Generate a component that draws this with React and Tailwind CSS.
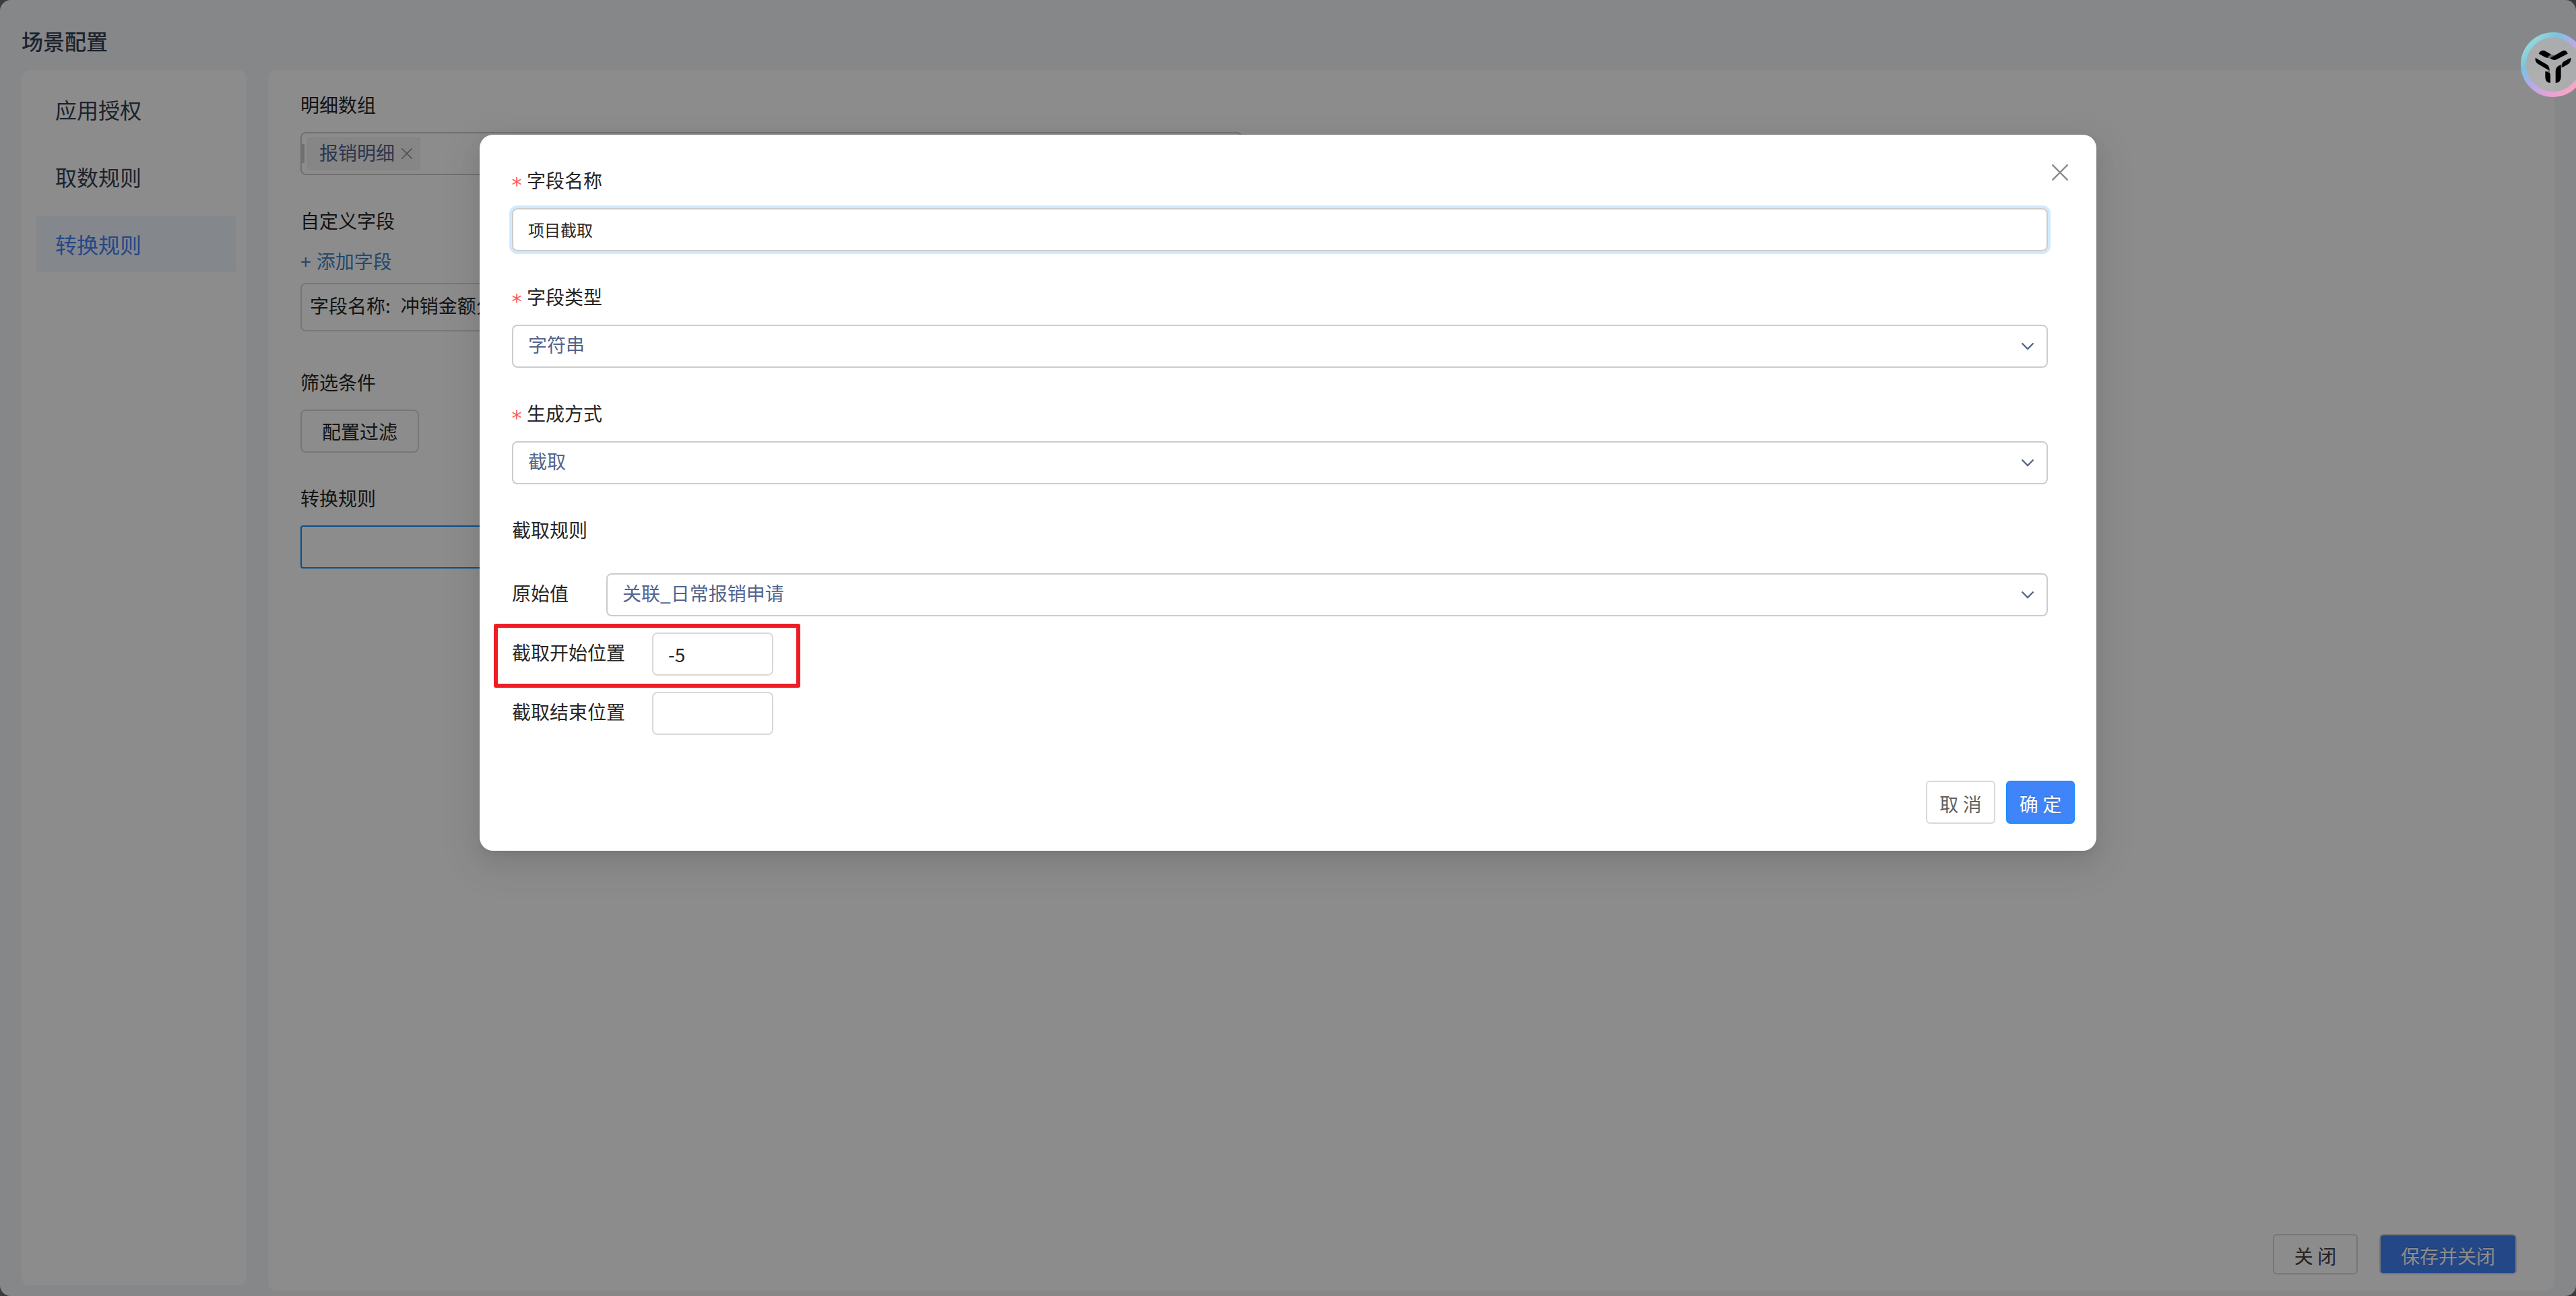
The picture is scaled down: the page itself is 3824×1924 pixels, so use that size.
import clsx from 'clsx';

const menus = [
  { key: 'auth', label: '应用授权' },
  { key: 'fetch', label: '取数规则' },
  { key: 'transform', label: '转换规则' },
];

function ChevronIcon() {
  return (
    <svg width="20" height="12" viewBox="0 0 20 12" fill="none" className="flex-shrink-0">
      <path d="M1.5 1.5 L10 10 L18.5 1.5" stroke="#53658c" strokeWidth="2.4" />
    </svg>
  );
}

function CloseIcon({ className }) {
  return (
    <svg viewBox="0 0 24 24" fill="none" className={className}>
      <path d="M1.2 1.2 L22.8 22.8 M22.8 1.2 L1.2 22.8" stroke="currentColor" strokeWidth="2.4" strokeLinecap="round" />
    </svg>
  );
}

function Label({ required, className, children }) {
  return (
    <div className={clsx('flex h-11 items-center leading-[44px]', className)}>
      {required && (
        <span className="-ml-[2px] mr-2 w-4 pt-[16px] text-[30px] leading-[28px] text-[#ff5c5e] font-['DejaVu_Sans_Mono']">*</span>
      )}
      <span>{children}</span>
    </div>
  );
}

function Select({ value, className }) {
  return (
    <div className={clsx('flex h-16 items-center justify-between rounded-lg border-2 border-[#ccc] pl-[22px] pr-[18px]', className)}>
      <span className="pb-[6px] text-[#53658c]">{value}</span>
      <ChevronIcon />
    </div>
  );
}

function PositionRow({ label, value, className }) {
  return (
    <div className={clsx('flex h-16 items-center', className)}>
      <span className="w-52 pb-[6px]">{label}</span>
      <div className="flex h-16 w-[180px] items-center rounded-lg border-2 border-[#d9d9d9] px-[22px]">{value}</div>
    </div>
  );
}

function Sidebar() {
  return (
    <aside className="h-[1804px] w-[334px] space-y-4 rounded-xl bg-white py-4 pl-[22px] pr-4">
      {menus.map(({ key, label }) => (
        <div
          key={key}
          className={clsx(
            'flex h-[84px] items-center rounded-l px-7 text-[32px]',
            key === 'transform' ? 'bg-[#f0f6ff] text-[#4285f8]' : 'text-[#354052]'
          )}
        >
          {label}
        </div>
      ))}
    </aside>
  );
}

function RulePanel() {
  return (
    <main className="flex h-[1812px] w-[3394px] flex-col rounded-xl bg-white pb-6 pl-12 pr-14 pt-[29px] text-[28px] text-[#262626]">
      <Label>明细数组</Label>
      <div className="mt-[19px] flex h-16 w-[1398px] items-center rounded-lg border-2 border-[#ccc]">
        <div className="h-7 w-1 bg-[#ccc]" />
        <div className="ml-1 flex h-12 w-[168px] items-center rounded border-2 border-[#f0f0f0] bg-[#f5f5f5] pl-4 text-[#53658c]">
          <span className="pb-[4px] leading-[44px]">报销明细</span>
          <CloseIcon className="ml-[10px] h-4 w-4 text-[#8c8c8c]" />
        </div>
      </div>

      <Label className="mt-[45px]">自定义字段</Label>
      <Label className="mt-4 text-[#4484c4] [word-spacing:2px]">+ 添加字段</Label>
      <div className="mt-[11px] flex h-[72px] w-[1398px] items-center rounded-lg border-2 border-[#d9d9d9] px-3 pb-[6px]">
        <span className="mr-[15px]">字段名称:</span>
        <span>冲销金额分摊</span>
      </div>

      <Label className="mt-[53px]">筛选条件</Label>
      <button className="mt-[19px] h-16 w-[176px] rounded-lg border-2 border-[#d9d9d9]">配置过滤</button>

      <Label className="mt-[45px]">转换规则</Label>
      <div className="mt-[19px] h-16 w-[1398px] rounded border-2 border-[#1890ff]" />

      <div className="mt-auto flex justify-end gap-8">
        <button className="h-[60px] w-[126px] rounded-md border-2 border-[#d9d9d9] pt-1 leading-[52px] text-[#404040]">关 闭</button>
        <button className="h-[60px] w-[204px] rounded-md border-2 border-[#d9d9d9] bg-[#4381f7] pt-1 leading-[52px] text-white [text-shadow:0_-2px_0_rgba(0,0,0,0.12)]">
          保存并关闭
        </button>
      </div>
    </main>
  );
}

function FieldModal() {
  return (
    <div className="relative h-[1063px] w-[2400px] rounded-[20px] bg-white pl-12 pr-[72px] pt-[45px] text-[28px] text-[#262626] shadow-[0_12px_32px_0_rgba(0,0,0,0.08),0_6px_12px_-8px_rgba(0,0,0,0.12),0_18px_56px_16px_rgba(0,0,0,0.05)]">
      <CloseIcon className="absolute right-[42px] top-[44px] h-6 w-6 text-[#8c8c8c]" />

      <Label required>字段名称</Label>
      <div className="mt-5 flex h-16 items-center rounded-lg border-2 border-[#ccc] px-[22px] text-2xl ring-4 ring-[#d1e9ff]">
        项目截取
      </div>

      <Label required className="mt-[45px]">字段类型</Label>
      <Select value="字符串" className="mt-5" />

      <Label required className="mt-[45px]">生成方式</Label>
      <Select value="截取" className="mt-5" />

      <Label className="mt-[45px]">截取规则</Label>
      <div className="mt-[43px] flex items-center">
        <span className="w-[140px] pb-[6px]">原始值</span>
        <Select value="关联_日常报销申请" className="flex-1" />
      </div>
      <PositionRow label="截取开始位置" value="-5" className="mt-6" />
      <PositionRow label="截取结束位置" className="mt-6" />

      <div className="-mr-10 mt-[68px] flex justify-end gap-4">
        <button className="h-16 w-[103px] rounded-md border-2 border-[#d9d9d9] pt-1 leading-[56px] text-[#606266]">取 消</button>
        <button className="h-16 w-[102px] rounded-md border-2 border-[#1890ff] bg-[#3f85f9] pt-1 leading-[56px] text-white [text-shadow:0_-2px_0_rgba(0,0,0,0.12)]">
          确 定
        </button>
      </div>

      {/* highlight frame round the start position */}
      <div className="absolute left-[21px] top-[726px] h-[95px] w-[455px] rounded-[3px] border-[6px] border-[#ee1c25]" />
    </div>
  );
}

function AssistantBadge() {
  return (
    <svg width="96" height="96" viewBox="0 0 288 288" className="absolute left-[3742px] top-12">
      <defs>
        <linearGradient id="ring" x1="0" y1="0" x2="1" y2="1">
          <stop offset="0.14" stopColor="#93d6da" />
          <stop offset="0.28" stopColor="#79c3e0" />
          <stop offset="0.48" stopColor="#b4abe9" />
          <stop offset="0.7" stopColor="#e6a2d6" />
          <stop offset="0.86" stopColor="#f5a6c4" />
        </linearGradient>
      </defs>
      <circle cx="144" cy="144" r="122" fill="#fff" fillOpacity="0.31" />
      <circle cx="144" cy="144" r="132" fill="none" stroke="url(#ring)" strokeWidth="24" />
      <path d="M118 113 L137 99 L150 103 L130 116Z" fill="#6b6b6b" />
      <path d="M110 173 L128 170 L130 186Z" fill="#6b6b6b" />
      <path d="M178 146 L188 132 L184 156 L179 160Z" fill="#6b6b6b" />
      <path d="M80 95 Q86 81 100 81 Q106 81 110 84 L136 99 Q126 104 119 113 Q114 114 110 112Z" />
      <path d="M130 115 L184 84 Q190 81 196 81 Q205 83 209 95 L160 121 Q144 128 130 115Z" />
      <path d="M65 113 L116 143 Q129 151 128 171 L76 140 Q63 132 65 113Z" />
      <path d="M223 113 L188 132 Q182 144 184 157 L212 141 Q225 132 223 113Z" />
      <path d="M109 173 L128 181 Q132 184 132 192 L132 225 Q110 224 109 200Z" />
      <path d="M155 225 V176 Q155 156 168 149 L179 145 V200 Q178 224 155 225Z" />
    </svg>
  );
}

export default function App() {
  return (
    <div className="relative h-[1924px] w-[3824px] overflow-hidden bg-[#6d6d6d] font-['Noto_Sans_CJK_SC',sans-serif]">
      <div className="h-full rounded-2xl bg-[#f3f6f9] px-8">
        <h1 className="h-[104px] pt-[36px] text-[32px] font-medium leading-[48px] text-[#354052]">场景配置</h1>
        <div className="flex gap-8">
          <Sidebar />
          <RulePanel />
        </div>
      </div>

      {/* modal layer */}
      <div className="absolute inset-0 flex items-start justify-center bg-black/45 pt-[200px]">
        <FieldModal />
      </div>

      <AssistantBadge />
    </div>
  );
}
